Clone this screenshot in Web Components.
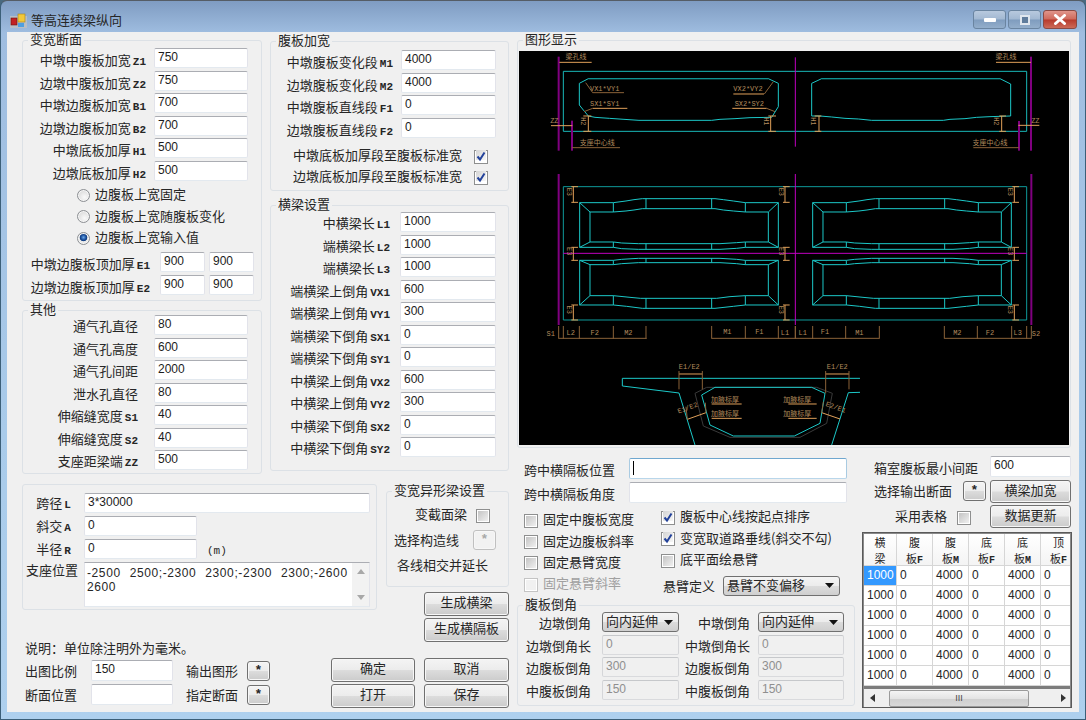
<!DOCTYPE html>
<html lang="zh">
<head>
<meta charset="utf-8">
<title>等高连续梁纵向</title>
<style>
  html, body { margin: 0; background: #4a6a80; }
  body { font: 13px/20px "Noto Sans CJK SC", "Liberation Sans", sans-serif; color: #262626; }
  .top { display: grid; grid-template-columns: 240px 239px; column-gap: 8px; height: 442px; }
  .col2 { padding-top: 1px; }
  .stack { display: flex; flex-direction: column; gap: 2.5px; }
  .radios { margin: 4px 0 3px 54px; }
  .radios radio-button { height: 21.5px; }
  .e-rows { display: flex; flex-direction: column; gap: 3px; --lw: 127px; --gap: 10px; --iw: 94px; }
  .wide-checks { margin-top: 8px; padding-left: 22px; }
  .wide-checks check-box { height: 21px; }

  .lower { display: grid; grid-template-columns: 364px 38px 85px; grid-template-rows: 126px 48px 54px; margin-top: 10px; }
  .span-a { width: 355px; }
  .span-a .stack { padding-top: 8px; --lw: 61px; --gap: 0px; --ly: 0px; gap: 3px; }
  .label-center { --la: center; }
  .unit { display: flex; align-items: flex-end; }
  .unit span { margin-left: 10px; font: 11px/16px "Liberation Mono", monospace; }
  .right-cell { grid-column: 2 / 4; grid-row: 1 / 3; margin-top: -1px; }
  .shape-group { height: 104px; }
  .shape-group .r1 { margin-top: 8px; padding-left: 28px; }
  .shape-group .r1 check-box { --cb-gap: 9px; }
  .shape-group .r2 { margin-top: 6px; padding-left: 7px; display: flex; gap: 14px; align-items: center; }
  .shape-group .r3 { margin-top: 5px; padding-left: 10px; }
  .gen { display: flex; flex-direction: column; gap: 2px; margin: 5px 0 0 38px; }
  .gen push-button, .actions push-button { height: 24px; }
  .note { grid-column: 1; grid-row: 2; align-self: end; padding-left: 3px; }
  .form { grid-column: 1 / 3; grid-row: 3; display: flex; justify-content: space-between; padding-right: 9px; }
  .form-grid { display: grid; grid-template-columns: 66px 82px 13px 61px 23px; grid-template-rows: 21px 21px; row-gap: 3px; margin: 2px 0 0 3px; align-items: center; }
  .form-grid push-button { height: 20px; }
  .actions { display: flex; flex-direction: column; gap: 2px; width: 84px; }
  .actions.last { grid-column: 3; grid-row: 3; width: 85px; }

  .right { width: 559px; }
  .picture { width: 554px; height: 416px; --pad: 3px 1px 0; --lm: 4px; }
  .under { display: grid; grid-template-columns: 337px 222px; }
  .under-left { padding-top: 10px; }
  .pos-rows { display: flex; flex-direction: column; gap: 3px; margin-left: 7px; --lw: 105px; --gap: 0px; --iw: 218px; --la: left; }
  .pos-rows text-box { height: 21px; }
  .checks { display: grid; grid-template-columns: 137px 190px; margin: 6px 0 0 7px; height: 86px; }
  .checks > div { display: flex; flex-direction: column; }
  .checks .c1 { padding-top: 1px; }
  .checks .c1 check-box { height: 21.4px; }
  .checks .c2 { margin-top: -2px; }
  .checks .c2 check-box { height: 21.6px; }
  .overhang { display: flex; gap: 8px; align-items: center; margin: 4px 0 0 2px; }
  .overhang combo-box { width: 117px; }
  .chamfer { height: 109px; margin-top: 2px; --pad: 0; width: 338px; }
  .chamfer .rows { display: flex; flex-direction: column; gap: 2.6px; margin-top: -1px; }
  .duo { display: flex; --la: right; }
  .duo .a { --lw: 73px; --gap: 11px; --iw: 77px; }
  .duo .b { --lw: 71px; --gap: 8px; --iw: 86px; }
  .under-right { display: grid; grid-template-columns: 136px 81px; grid-template-rows: 21px 22px 23px; row-gap: 3px; padding: 8px 0 0 0; margin-left: 0; align-content: start; }
  .under-right .lbl { padding: 2px 0 0 20px; display: flex; align-items: center; }
  .under-right .btn-row { padding-left: 20px; display: flex; align-items: center; gap: 11px; }
  .under-right .btn-row push-button { width: 23px; height: 20px; }
  .under-right .chk { padding: 4px 0 0 41px; }
  .under-right data-grid { grid-column: 1 / 3; margin: 1px 0 0 8px; }
</style>
</head>
<body>
<win-window title="等高连续梁纵向">
  <div class="left">
    <div class="top">
      <div>
        <group-box label="变宽断面" style="height:269px;--lw:123px;--gap:8px;--iw:94px;--ly:2px">
          <div class="stack">
            <field-row label="中墩中腹板加宽Z1"><text-box>750</text-box></field-row>
            <field-row label="边墩中腹板加宽Z2"><text-box>750</text-box></field-row>
            <field-row label="中墩边腹板加宽B1"><text-box>700</text-box></field-row>
            <field-row label="边墩边腹板加宽B2"><text-box>700</text-box></field-row>
            <field-row label="中墩底板加厚H1"><text-box>500</text-box></field-row>
            <field-row label="边墩底板加厚H2"><text-box>500</text-box></field-row>
          </div>
          <div class="radios">
            <radio-button>边腹板上宽固定</radio-button>
            <radio-button>边腹板上宽随腹板变化</radio-button>
            <radio-button checked>边腹板上宽输入值</radio-button>
          </div>
          <div class="e-rows">
            <field-row label="中墩边腹板顶加厚E1"><text-box>900</text-box><text-box>900</text-box></field-row>
            <field-row label="边墩边腹板顶加厚E2"><text-box>900</text-box><text-box>900</text-box></field-row>
          </div>
        </group-box>
        <group-box label="其他" style="height:172px;margin-top:1px;--lw:115px;--gap:16px;--iw:94px">
          <div class="stack" style="margin-top:-3px">
            <field-row label="通气孔直径"><text-box>80</text-box></field-row>
            <field-row label="通气孔高度"><text-box>600</text-box></field-row>
            <field-row label="通气孔间距"><text-box>2000</text-box></field-row>
            <field-row label="泄水孔直径"><text-box>80</text-box></field-row>
            <field-row label="伸缩缝宽度S1"><text-box>40</text-box></field-row>
            <field-row label="伸缩缝宽度S2"><text-box>40</text-box></field-row>
            <field-row label="支座距梁端ZZ"><text-box>500</text-box></field-row>
          </div>
        </group-box>
      </div>
      <div class="col2">
        <group-box label="腹板加宽" style="height:158px;--lw:122px;--gap:8px;--iw:95px;--ly:2px">
          <div class="stack" style="margin-top:1px;gap:2.7px">
            <field-row label="中墩腹板变化段M1"><text-box>4000</text-box></field-row>
            <field-row label="边墩腹板变化段M2"><text-box>4000</text-box></field-row>
            <field-row label="中墩腹板直线段F1"><text-box>0</text-box></field-row>
            <field-row label="边墩腹板直线段F2"><text-box>0</text-box></field-row>
          </div>
          <div class="wide-checks" style="--cb-gap:12px">
            <check-box reverse checked>中墩底板加厚段至腹板标准宽</check-box>
            <check-box reverse checked>边墩底板加厚段至腹板标准宽</check-box>
          </div>
        </group-box>
        <group-box label="横梁设置" style="height:274px;margin-top:6px;--lw:119px;--gap:10px;--iw:96px">
          <div class="stack" style="margin-top:-1px">
            <field-row label="中横梁长L1"><text-box>1000</text-box></field-row>
            <field-row label="端横梁长L2"><text-box>1000</text-box></field-row>
            <field-row label="端横梁长L3"><text-box>1000</text-box></field-row>
            <field-row label="端横梁上倒角VX1"><text-box>600</text-box></field-row>
            <field-row label="端横梁上倒角VY1"><text-box>300</text-box></field-row>
            <field-row label="端横梁下倒角SX1"><text-box>0</text-box></field-row>
            <field-row label="端横梁下倒角SY1"><text-box>0</text-box></field-row>
            <field-row label="中横梁上倒角VX2"><text-box>600</text-box></field-row>
            <field-row label="中横梁上倒角VY2"><text-box>300</text-box></field-row>
            <field-row label="中横梁下倒角SX2"><text-box>0</text-box></field-row>
            <field-row label="中横梁下倒角SY2"><text-box>0</text-box></field-row>
          </div>
        </group-box>
      </div>
    </div>
    <div class="lower">
      <group-box class="span-a">
        <div class="stack label-center">
          <field-row label="跨径L" style="--iw:286px"><text-box>3*30000</text-box></field-row>
          <field-row label="斜交A" style="--iw:113px"><text-box>0</text-box></field-row>
          <div class="unit"><field-row label="半径R" style="--iw:113px"><text-box>0</text-box></field-row><span>(m)</span></div>
          <field-row label="支座位置" style="--iw:286px;--la:right;--lw:55px;--gap:6px;--ly:-2px;align-items:start"><memo-box>-2500 2500;-2300 2300;-2300 2300;-2600 2600</memo-box></field-row>
        </div>
      </group-box>
      <div class="right-cell">
        <group-box class="shape-group" label="变宽异形梁设置">
          <div class="r1"><check-box reverse>变截面梁</check-box></div>
          <div class="r2"><span>选择构造线</span><push-button star disabled style="width:23px;height:20px">*</push-button></div>
          <div class="r3">各线相交并延长</div>
        </group-box>
        <div class="gen">
          <push-button>生成横梁</push-button>
          <push-button>生成横隔板</push-button>
        </div>
      </div>
      <div class="note">说明：单位除注明外为毫米。</div>
      <div class="form">
        <div class="form-grid">
          <span>出图比例</span><text-box style="height:21px">150</text-box><i></i><span>输出图形</span><push-button star>*</push-button>
          <span>断面位置</span><text-box style="height:21px"></text-box><i></i><span>指定断面</span><push-button star>*</push-button>
        </div>
        <div class="actions">
          <push-button>确定</push-button>
          <push-button>打开</push-button>
        </div>
      </div>
      <div class="actions last">
        <push-button>取消</push-button>
        <push-button>保存</push-button>
      </div>
    </div>
  </div>
  <div class="right">
    <group-box class="picture" label="图形显示"><bridge-drawing></bridge-drawing></group-box>
    <div class="under">
      <div class="under-left">
        <div class="pos-rows">
          <field-row label="跨中横隔板位置"><text-box focused></text-box></field-row>
          <field-row label="跨中横隔板角度"><text-box></text-box></field-row>
        </div>
        <div class="checks">
          <div class="c1">
            <check-box>固定中腹板宽度</check-box>
            <check-box>固定边腹板斜率</check-box>
            <check-box>固定悬臂宽度</check-box>
            <check-box disabled>固定悬臂斜率</check-box>
          </div>
          <div class="c2">
            <check-box checked>腹板中心线按起点排序</check-box>
            <check-box checked>变宽取道路垂线(斜交不勾)</check-box>
            <check-box>底平面绘悬臂</check-box>
            <div class="overhang"><span>悬臂定义</span><combo-box>悬臂不变偏移</combo-box></div>
          </div>
        </div>
        <group-box class="chamfer" label="腹板倒角">
          <div class="rows">
            <div class="duo"><field-row class="a" label="边墩倒角"><combo-box>向内延伸</combo-box></field-row><field-row class="b" label="中墩倒角"><combo-box>向内延伸</combo-box></field-row></div>
            <div class="duo"><field-row class="a" label="边墩倒角长"><text-box disabled>0</text-box></field-row><field-row class="b" label="中墩倒角长"><text-box disabled>0</text-box></field-row></div>
            <div class="duo"><field-row class="a" label="边腹板倒角"><text-box disabled>300</text-box></field-row><field-row class="b" label="边腹板倒角"><text-box disabled>300</text-box></field-row></div>
            <div class="duo"><field-row class="a" label="中腹板倒角"><text-box disabled>150</text-box></field-row><field-row class="b" label="中腹板倒角"><text-box disabled>150</text-box></field-row></div>
          </div>
        </group-box>
      </div>
      <div class="under-right">
        <div class="lbl">箱室腹板最小间距</div><text-box style="height:21px">600</text-box>
        <div class="btn-row"><span>选择输出断面</span><push-button star>*</push-button></div><push-button>横梁加宽</push-button>
        <div class="chk" style="--cb-gap:10px"><check-box reverse>采用表格</check-box></div><push-button>数据更新</push-button>
        <data-grid></data-grid>
      </div>
    </div>
  </div>
</win-window>

<script>
// shared base: clones the static template of each element
class ShadowBox extends HTMLElement {
  constructor() {
    super();
    const t = document.createElement("template");
    t.innerHTML = this.constructor.markup;
    this.attachShadow({ mode: "open" }).appendChild(t.content);
  }
}

class WinWindow extends ShadowBox {
  static markup = `
  <style>
    :host { display: block; box-sizing: border-box; width: 1086px; height: 720px; padding: 0 7px 8px; border-radius: 7px 7px 0 0;
      border: 1px solid #3c5f78; border-top-color: #555d66;
      background: linear-gradient(#7f9cc2 0, #9fbde0 32px, #a9cbea 60%, #aed0ee); }
    .bar { display: flex; height: 31px; align-items: flex-start; }
    .bar svg.icon { margin: 12px 4px 0 2px; flex: none; }
    .name { margin-top: 9px; line-height: 20px; }
    .ctl { margin-left: auto; display: flex; gap: 2px; margin-top: 9px; margin-right: 1px; }
    .ctl div { width: 33px; height: 19px; box-sizing: border-box; border: 1px solid #6a84a0; border-radius: 3px;
      background: linear-gradient(#b8c9de 0, #a2b8d2 48%, #7f9cbe 52%, #93aecb); display: flex; align-items: center; justify-content: center; }
    .ctl .x { width: 34px; border-color: #8a4a44; background: linear-gradient(#e0958b 0, #cf6a5d 48%, #b83a2c 52%, #cc6a58); }
    .client { height: 680px; margin-left: -1px; margin-right: -1px; background: #f0f0f0; display: flex; gap: 8px; padding-left: 15px; overflow: hidden; }
  </style>
  <div class="bar">
    <svg class="icon" width="17" height="16" viewBox="0 0 17 16">
      <rect x="0" y="3" width="17" height="12" fill="#b9bec5"/>
      <rect x="1" y="5" width="6" height="7" fill="#c22222" stroke="#6a1414" stroke-width=".6"/>
      <rect x="8" y="1" width="7" height="8" fill="#f2c83a" stroke="#a5821a" stroke-width=".6"/>
      <rect x="8" y="10" width="6" height="4" fill="#4f9fe0"/>
    </svg>
    <span class="name"></span>
    <div class="ctl">
      <div><svg width="12" height="4"><rect width="12" height="4" rx="1" fill="#fff"/></svg></div>
      <div><svg width="10" height="10" viewBox="0 0 10 10"><rect x="1" y="1" width="8" height="8" fill="#5f7c9c" stroke="#dfe6ee" stroke-width="2"/></svg></div>
      <div class="x"><svg width="14" height="11" viewBox="0 0 14 11"><path d="M2.5 1.5 L11.5 9.5 M11.5 1.5 L2.5 9.5" stroke="#fff" stroke-width="3" stroke-linecap="round"/></svg></div>
    </div>
  </div>
  <div class="client"><slot></slot></div>`;
  connectedCallback() {
    this.shadowRoot.querySelector(".name").textContent = this.getAttribute("title");
    this.removeAttribute("title");
  }
}

class GroupBox extends ShadowBox {
  static markup = `
  <style>
    :host { display: block; }
    fieldset { box-sizing: border-box; height: 100%; margin: 0; padding: var(--pad, 0); min-width: 0;
      border: 1px solid #dce1e6; border-radius: 3px; }
    legend { padding: 0 2px; margin-left: var(--lm, 5px); height: 16px; line-height: 14px; }
    legend:empty { display: none; }
  </style>
  <fieldset><legend></legend><slot></slot></fieldset>`;
  connectedCallback() {
    this.shadowRoot.querySelector("legend").textContent = this.getAttribute("label") || "";
  }
}

class FieldRow extends ShadowBox {
  static markup = `
  <style>
    :host { display: grid; grid-template-columns: var(--lw, 120px) var(--iw, 95px); column-gap: var(--gap, 8px); align-items: center; }
    /* taller line than box: drops the text a little below the field's middle, as in the reference */
    .t { text-align: var(--la, right); white-space: nowrap; height: 20px; line-height: calc(20px + 2 * var(--ly, 1px)); }
    i { font: bold 11px/14px "Liberation Mono", monospace; margin-left: 2px; }
    .c { display: flex; gap: 4px; }
    ::slotted(*) { flex: 1; min-width: 0; }
  </style>
  <span class="t"></span><div class="c"><slot></slot></div>`;
  connectedCallback() {
    const label = this.getAttribute("label");
    const m = label.match(/^(.*?)([A-Z]+\d*)$/);
    const t = this.shadowRoot.querySelector(".t");
    t.textContent = m ? m[1] : label;
    if (m) {
      const i = document.createElement("i");
      i.textContent = m[2];
      t.appendChild(i);
    }
  }
}

class TextBox extends ShadowBox {
  static markup = `
  <style>
    :host { display: block; box-sizing: border-box; height: 20px; padding: 0 3px; overflow: hidden; background: #fff;
      border: 1px solid; border-color: #abadb3 #e2e3ea #e3e9ef #e2e3ea; border-radius: 2px;
      font: 12px/16px "Liberation Sans", sans-serif; color: #1c1c1c; }
    :host([disabled]) { background: #f0f0f0; color: #8f8f8f; border-color: #c6c8cb #d5d6d9 #d9dadd #d5d6d9; }
    :host([focused]) { border-color: #6fa7cf #a9cbe2 #b9d6ea #a9cbe2; }
    b { display: none; width: 1px; height: 14px; margin-top: 2px; background: #000; }
    :host([focused]) b { display: block; }
  </style>
  <b></b><slot></slot>`;
}

class MemoBox extends ShadowBox {
  static markup = `
  <style>
    :host { display: flex; box-sizing: border-box; height: 45px; background: #fff;
      border: 1px solid; border-color: #abadb3 #e2e3ea #e3e9ef #e2e3ea;
      font: 12px/14px "Liberation Sans", sans-serif; word-spacing: 5px; letter-spacing: .6px; }
    .text { flex: 1; padding: 3px 2px; }
    .bar { width: 17px; display: flex; flex-direction: column; justify-content: space-between; align-items: center; background: #f2f2f2; padding: 6px 0; box-sizing: border-box; height: 43px; }
    svg { display: block; }
  </style>
  <div class="text"><slot></slot></div>
  <div class="bar">
    <svg width="8" height="5"><path d="M0 5 L4 0 L8 5Z" fill="#a8a8a8"/></svg>
    <svg width="8" height="5"><path d="M0 0 L4 5 L8 0Z" fill="#a8a8a8"/></svg>
  </div>`;
}

class CheckBox extends ShadowBox {
  static markup = `
  <style>
    :host { display: flex; align-items: center; gap: var(--cb-gap, 5px); white-space: nowrap; }
    :host([reverse]) { flex-direction: row-reverse; justify-content: flex-end; }
    .b { box-sizing: border-box; flex: none; width: 14px; height: 14px; border: 1px solid #8e8f8f; background: #fff; padding: 1px; }
    .i { width: 100%; height: 100%; background: linear-gradient(135deg, #c4c4c4, #f0f0f0); }
    svg { display: none; margin: -2px 0 0 -1px; }
    :host([checked]) svg { display: block; }
    :host([checked]) .i { background: linear-gradient(135deg, #d4d4d4, #f6f6f6); }
    :host([disabled]) { color: #a0a0a0; }
    :host([disabled]) .b { border-color: #c4c4c4; }
    :host([disabled]) .i { background: #f1f1f1; }
    span { margin-top: -3px; line-height: 20px; }
  </style>
  <div class="b"><div class="i"><svg width="12" height="12" viewBox="0 0 12 12"><path d="M2.5 6.5 L5 9.5 L9.5 2.5" fill="none" stroke="#23429a" stroke-width="2"/></svg></div></div>
  <span><slot></slot></span>`;
}

class RadioButton extends ShadowBox {
  static markup = `
  <style>
    :host { display: flex; align-items: center; gap: 5px; white-space: nowrap; }
    .r { flex: none; width: 13px; height: 13px; box-sizing: border-box; border-radius: 50%; border: 1px solid #8c8f93;
      background: radial-gradient(circle at 60% 65%, #fafafa, #d0d0d0); box-shadow: inset 0 0 0 1px #f6f6f6; }
    :host([checked]) .r { background: radial-gradient(circle at 50% 40%, #69a8e8 0, #1c4f9c 2.5px, #0d3c80 3.5px, #e8e8e8 4.2px); }
    span { margin-top: -2px; }
  </style>
  <div class="r"></div><span><slot></slot></span>`;
}

class PushButton extends ShadowBox {
  static markup = `
  <style>
    :host { display: flex; align-items: center; justify-content: center; box-sizing: border-box; height: 23px; padding-bottom: 4px;
      border: 1px solid #707070; border-radius: 3px; white-space: nowrap; line-height: 18px;
      background: linear-gradient(#f4f4f4 0, #ececec 48%, #dcdcdc 52%, #cbcbcb); box-shadow: inset 0 0 0 1px #f7f7f7; }
    :host([star]) { font: bold 13px/16px "Liberation Mono", monospace; padding-bottom: 0; }
    :host([disabled]) { color: #a8a8a8; border-color: #c0c0c0; background: #f2f2f2; }
  </style>
  <slot></slot>`;
}

class ComboBox extends ShadowBox {
  static markup = `
  <style>
    :host { display: flex; box-sizing: border-box; height: 20px; padding: 0 5px 2px 3px; align-items: center; justify-content: space-between;
      border: 1px solid #707070; border-radius: 3px; line-height: 16px; white-space: nowrap;
      background: linear-gradient(#f4f4f4 0, #ececec 48%, #dcdcdc 52%, #cfcfcf); }
    svg { flex: none; margin: 2px 0 0 4px; }
  </style>
  <slot></slot><svg width="9" height="5"><path d="M0 0 H9 L4.5 5Z" fill="#111"/></svg>`;
}

class DataGrid extends ShadowBox {
  static markup = `
  <style>
    :host { display: block; box-sizing: border-box; width: 210px; height: 176px; border: 1px solid #5a5a5a; box-shadow: inset 0 0 0 1px #8a8a8a; padding: 1px 1px 0; }
    .cells { display: grid; grid-template-columns: 33px repeat(5, 36px); grid-template-rows: 32px repeat(6, 20px); width: 206px; overflow: hidden; background: #fff; }
    .cells div { box-sizing: border-box; border-right: 1px solid #d6d6d6; border-bottom: 1px solid #d6d6d6; }
    .h { text-align: center; line-height: 16px; font-size: 11px; background: linear-gradient(#fff, #f4f4f4); }
    .h i { font: bold 10px/12px "Liberation Mono", monospace; }
    .v { font: 12px/19px "Liberation Sans", sans-serif; padding-left: 3px; }
    .v.sel { background: #3399ff; color: #fff; }
    .band { height: 3px; background: #7c7c7c; }
    .sb { display: flex; align-items: center; height: 18px; background: #efefef; }
    .sb svg { flex: none; }
    .th { width: 140px; height: 17px; margin-left: 9px; box-sizing: border-box; border: 1px solid #9a9a9a; border-radius: 2px;
      background: linear-gradient(#f4f4f4, #e4e4e4 50%, #cfcfcf 52%, #d8d8d8); text-align: center; font: 9px/15px "Liberation Sans", sans-serif; color: #444; }
    .gap { flex: 1; }
  </style>
  <div class="cells"></div>
  <div class="band"></div>
  <div class="sb">
    <svg width="12" height="18" style="margin-left:4px"><path d="M7 5 V13 L2 9Z" fill="#333"/></svg>
    <div class="th">III</div><div class="gap"></div>
    <svg width="12" height="18" style="margin-right:1px"><path d="M4 5 V13 L9 9Z" fill="#333"/></svg>
  </div>`;
  connectedCallback() {
    const cells = this.shadowRoot.querySelector(".cells");
    const heads = [["横", "梁"], ["腹", "板", "F"], ["腹", "板", "M"], ["底", "板", "F"], ["底", "板", "M"], ["顶", "板", "F"]];
    for (const [a, b, c] of heads) {
      const d = document.createElement("div");
      d.className = "h";
      d.append(a, document.createElement("br"), b);
      if (c) {
        const i = document.createElement("i");
        i.textContent = c;
        d.append(i);
      }
      cells.appendChild(d);
    }
    for (let r = 0; r < 6; r++) {
      ["1000", "0", "4000", "0", "4000", "0"].forEach((v, c) => {
        const d = document.createElement("div");
        d.className = "v" + (r === 0 && c === 0 ? " sel" : "");
        d.textContent = v;
        cells.appendChild(d);
      });
    }
  }
}

// coordinates below are taken at 3x from the reference, each group scales them back
const pl = (pts, cls) => `<polyline class="${cls || "c"}" points="${pts}"/>`;
const seg = (x1, y1, x2, y2, cls) => `<line class="${cls || "o"}" x1="${x1}" y1="${y1}" x2="${x2}" y2="${y2}"/>`;
const lab = (x, y, s, rot) => `<text x="${x}" y="${y}"${rot ? ` transform="rotate(${rot} ${x} ${y})"` : ""}>${s}</text>`;

function upperPanel() {
  return pl("179,98 280,98 318,93 342,89 367,86 585,86 610,89 640,93 676,98 775,98 775,232 676,232 650,235 600,238 355,238 305,236 280,232 179,232 179,98")
    + pl("210,126 280,126 318,123 342,120 367,116 585,116 610,120 640,123 676,126 745,126 745,216 676,216 650,218 600,221 355,221 305,219 280,216 210,216 210,126")
    + seg(179, 98, 210, 126, "c") + seg(775, 98, 745, 126, "c") + seg(179, 232, 210, 216, "c") + seg(775, 232, 745, 216, "c")
    + [280, 676].map(x => seg(x, 98, x, 126, "c") + seg(x, 216, x, 232, "c")).join("")
    + [378, 575].map(x => seg(x, 86, x, 116, "c") + seg(x, 221, x, 238, "c")).join("");
}
function lowerPanel() {
  return pl("179,271 280,271 305,268 355,265 600,265 650,268 676,271 775,271 775,405 676,405 640,409 585,415 367,415 320,409 280,405 179,405 179,271")
    + pl("210,284 280,284 305,281 355,278 600,278 650,281 676,284 745,284 745,377 676,377 630,380 590,385 362,385 330,382 280,377 210,377 210,284")
    + seg(179, 271, 210, 284, "c") + seg(775, 271, 745, 284, "c") + seg(179, 405, 210, 377, "c") + seg(775, 405, 745, 377, "c")
    + [280, 676].map(x => seg(x, 271, x, 284, "c") + seg(x, 377, x, 405, "c")).join("")
    + [378, 575].map(x => seg(x, 265, x, 278, "c") + seg(x, 385, x, 415, "c")).join("");
}
function bracket(x, y1, y2, t) {
  return seg(x, y1, x, y2) + seg(x - 6, y1, x + 14, y1) + seg(x - 6, y2, x + 14, y2) + lab(x - 18, (y1 + y2) / 2 - 8, t, 90);
}
function ticks(list) {
  return list.map(x => seg(x, 468, x, 506, "b")).join("");
}

class BridgeDrawing extends ShadowBox {
  static markup = `
  <style>
    :host { display: block; width: 550px; height: 394px; background: #000; overflow: hidden; }
    svg { display: block; }
    * { vector-effect: non-scaling-stroke; }
    polyline, line { fill: none; stroke-width: 1; }
    .c { stroke: #1cc8c8; }
    .d { stroke: #0f8c8c; }
    .k { stroke: #3a3a3a; }
    .o { stroke: #e0a05a; }
    .b { stroke: #8a6238; }
    .m { stroke: #c000c0; }
    .p { stroke: #800080; stroke-width: 2; }
    text { fill: #b08a5c; font: 21px "Liberation Mono", "Noto Sans CJK SC", monospace; text-anchor: middle; }
  </style>
  <svg width="550" height="394" viewBox="519 51 550 394"></svg>`;
  connectedCallback() {
    const s = "scale(0.33333)";
    const top = `
    <g transform="translate(520 30) ${s}">
      <rect x="130" y="124" width="1390" height="180" fill="none" stroke="#19b8b8" stroke-width="1"/>
      ${pl("178,160 205,146 745,146 775,160 775,230 755,262 690,263 645,266 600,268 575,271 357,271 312,268 268,265 225,262 205,258 190,240 178,225 178,160")}
      ${seg(205, 146, 745, 146, "d")}
      ${seg(116, 80, 116, 362, "p")}${seg(156, 272, 156, 362, "p")}${seg(826, 82, 826, 350, "m")}
      ${seg(118, 97, 215, 97)}${lab(168, 88, "梁孔线")}
      ${seg(218, 188, 312, 188, "b")}${seg(197, 158, 218, 188, "b")}${lab(254, 184, "VX1*VY1")}
      ${seg(218, 235, 322, 235)}${seg(192, 245, 218, 235, "b")}${lab(254, 228, "SX1*SY1")}
      ${seg(640, 192, 732, 192)}${seg(733, 192, 760, 155, "b")}${lab(684, 183, "VX2*VY2")}
      ${seg(637, 235, 740, 235)}${seg(740, 235, 765, 245, "b")}${lab(688, 228, "SX2*SY2")}
      ${seg(205, 258, 205, 304)}${seg(190, 258, 214, 258)}${seg(190, 304, 214, 304)}${lab(182, 274, "H2", 90)}
      ${seg(752, 258, 752, 304)}${seg(745, 258, 768, 258)}${seg(745, 304, 768, 304)}${lab(732, 274, "H1", 90)}
      ${lab(103, 280, "ZZ")}${seg(93, 287, 157, 287)}
      ${seg(156, 353, 300, 353, "b")}${lab(232, 346, "支座中心线")}
    </g>
    <g transform="translate(800 0) ${s}">
      ${pl("35,250 65,236 600,236 632,252 632,348 570,350 530,352 495,356 450,358 430,361 215,361 175,357 135,355 95,351 60,348 35,348 35,250")}
      ${seg(65, 236, 600, 236, "d")}
      ${seg(693, 170, 693, 452, "p")}${seg(657, 363, 657, 452, "p")}
      ${seg(588, 187, 693, 187)}${lab(618, 178, "梁孔线")}
      ${seg(57, 348, 57, 394)}${seg(44, 348, 64, 348)}${seg(44, 394, 64, 394)}${lab(32, 364, "H1", 90)}
      ${seg(605, 348, 605, 394)}${seg(598, 348, 618, 348)}${seg(598, 394, 618, 394)}${lab(581, 364, "H2", 90)}
      ${lab(706, 370, "ZZ")}${seg(655, 376, 718, 376)}
      ${seg(520, 443, 657, 443, "b")}${lab(570, 436, "支座中心线")}
    </g>`;
    const z5 = `
    <g transform="translate(520 170) ${s}">
      <rect x="130" y="50" width="1390" height="400" fill="none" stroke="#0f9a9a" stroke-width="1"/>
      ${seg(130, 250, 1520, 250, "m")}
      ${seg(116, 12, 116, 465, "p")}${seg(826, 12, 826, 465, "m")}
      ${upperPanel()}${lowerPanel()}
      <g transform="translate(699 0)">${upperPanel()}${lowerPanel()}</g>
      ${bracket(160, 50, 97, "E3")}${bracket(160, 232, 271, "E3")}${bracket(160, 405, 450, "E3")}
      ${bracket(795, 50, 97, "E3")}${bracket(795, 232, 271, "E3")}${bracket(795, 405, 450, "E3")}
      ${bracket(1483, 50, 97, "E3")}${bracket(1483, 232, 271, "E3")}${bracket(1483, 405, 450, "E3")}
      ${ticks([116, 130, 178, 280, 378, 575, 676, 775, 826])}
      ${seg(116, 505, 380, 505, "b")}${seg(575, 505, 826, 505, "b")}
      ${lab(92, 498, "S1")}${lab(152, 494, "L2")}${lab(224, 494, "F2")}${lab(325, 494, "M2")}
      ${lab(622, 491, "M1")}${lab(718, 491, "F1")}${lab(795, 494, "L1")}
    </g>
    <g transform="translate(790 170) ${s}">
      ${ticks([16, 68, 167, 268, 463, 562, 665, 710, 724])}
      ${seg(16, 505, 268, 505, "b")}${seg(463, 505, 724, 505, "b")}
      ${lab(38, 494, "L1")}${lab(105, 491, "F1")}${lab(208, 494, "M1")}${lab(502, 494, "M2")}${lab(600, 494, "F2")}${lab(683, 494, "L3")}${lab(738, 498, "S2")}
      ${seg(724, 12, 724, 465, "p")}
    </g>`;
    const z7 = `
    <g transform="translate(600 360) ${s}">
      ${pl("780,55 67,55 67,78 237,99 285,255")}
      ${pl("780,97 745,98 695,255")}
      ${pl("285,100 320,82 650,82 697,100 680,190 600,232 390,232 310,198 285,100", "k")}
      ${pl("305,105 345,82 635,82 675,100 660,190 583,228 400,228 330,195 305,105")}
      ${seg(237, 42, 307, 42)}${seg(237, 33, 237, 88, "b")}${seg(307, 33, 307, 88, "b")}${lab(268, 28, "E1/E2")}
      ${seg(677, 42, 747, 42)}${seg(677, 33, 677, 100, "b")}${seg(747, 33, 747, 88, "b")}${lab(712, 28, "E1/E2")}
      ${seg(335, 132, 425, 132)}${seg(335, 175, 425, 175)}${seg(565, 132, 650, 132)}${seg(565, 175, 650, 175)}
      ${lab(375, 126, "加腋标厚")}${lab(375, 169, "加腋标厚")}${lab(592, 126, "加腋标厚")}${lab(592, 169, "加腋标厚")}
      ${seg(262, 178, 318, 158)}${seg(258, 140, 262, 178, "b")}${seg(316, 128, 318, 158, "b")}
      ${seg(665, 158, 720, 177)}${seg(670, 125, 665, 158, "b")}${lab(265, 150, "E1/E2", -20)}${lab(705, 148, "E2/E1", 20)}
    </g>`;
    this.shadowRoot.querySelector("svg").innerHTML = z5 + top + z7;
  }
}

customElements.define("win-window", WinWindow);
customElements.define("group-box", GroupBox);
customElements.define("field-row", FieldRow);
customElements.define("text-box", TextBox);
customElements.define("memo-box", MemoBox);
customElements.define("check-box", CheckBox);
customElements.define("radio-button", RadioButton);
customElements.define("push-button", PushButton);
customElements.define("combo-box", ComboBox);
customElements.define("data-grid", DataGrid);
customElements.define("bridge-drawing", BridgeDrawing);
</script>
</body>
</html>
